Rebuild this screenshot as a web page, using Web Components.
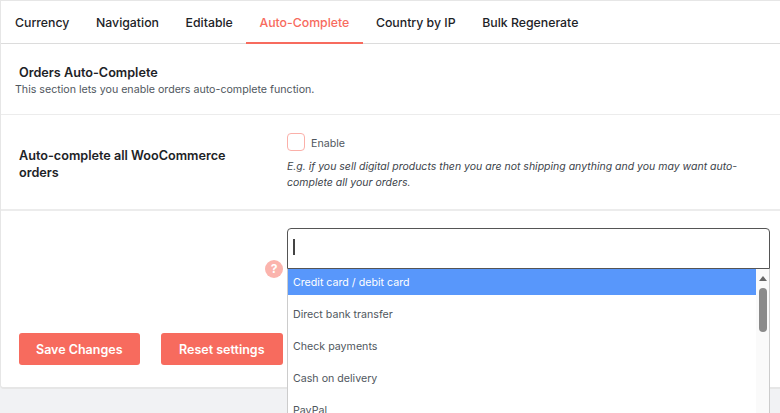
<!DOCTYPE html>
<html>
<head>
<meta charset="utf-8">
<title>Auto-Complete</title>
<style>
  html, body { margin: 0; height: 413px; overflow: hidden; background: #f1f2f4; }
  body { font-family: Inter, "Liberation Sans", sans-serif; color: #1d2327; }
</style>
</head>
<body>
<settings-page>
  <tab-bar slot="tabs" active="Auto-Complete" tabs="Currency,Navigation,Editable,Auto-Complete,Country by IP,Bulk Regenerate"></tab-bar>
  <section-head title="Orders Auto-Complete">This section lets you enable orders auto-complete function.</section-head>
  <check-row label="Auto-complete all WooCommerce orders" check="Enable">E.g. if you sell digital products then you are not shipping anything and you may want auto-complete all your orders.</check-row>
  <select-row options="Credit card / debit card,Direct bank transfer,Check payments,Cash on delivery,PayPal"></select-row>
</settings-page>

<script>
class SettingsPage extends HTMLElement {
  connectedCallback() {
    this.attachShadow({ mode: 'open' });
    this.shadowRoot.innerHTML = `
      <style>
        :host { display: block; }
        .card {
          height: 386px;
          background: #fff;
          border-top: 1px solid #e6e6e6;
          border-left: 1px solid #e6e6e6;
          border-bottom: 2px solid #e6e6e6;
          border-radius: 0 0 0 4px;
          display: flex;
          flex-direction: column;
        }
      </style>
      <div class="card"><slot name="tabs"></slot><slot></slot></div>
    `;
  }
}
customElements.define('settings-page', SettingsPage);

class TabBar extends HTMLElement {
  connectedCallback() {
    this.attachShadow({ mode: 'open' });
    const active = this.getAttribute('active');
    const tabs = this.getAttribute('tabs').split(',').map(t =>
      `<a class="${t === active ? 'on' : ''}">${t}</a>`).join('');
    this.shadowRoot.innerHTML = `
      <style>
        :host { display: block; }
        nav {
          display: flex;
          height: 42px;
          padding-left: 0.7px;
          border-bottom: 1px solid #dcdcdc;
        }
        a {
          padding: 0 13.3px;
          line-height: 43px;
          font-size: 12.3px;
          font-weight: 500;
          color: #1d2327;
          white-space: nowrap;
          height: 41px;
        }
        a.on {
          color: #f76b5e;
          border-bottom: 2px solid #f76b5e;
        }
      </style>
      <nav>${tabs}</nav>
    `;
  }
}
customElements.define('tab-bar', TabBar);

class SectionHead extends HTMLElement {
  connectedCallback() {
    this.attachShadow({ mode: 'open' });
    this.shadowRoot.innerHTML = `
      <style>
        :host { display: block; }
        .box {
          height: 71px;
          box-sizing: border-box;
          padding: 21px 0 0 14px;
          border-bottom: 1px solid #ececec;
        }
        h2 {
          margin: 0 0 0 4px;
          font-size: 12.65px;
          line-height: 16px;
          font-weight: 600;
          color: #1d2327;
        }
        p {
          margin: 1px 0 0;
          font-size: 10.65px;
          line-height: 16px;
          color: #50575e;
        }
      </style>
      <div class="box">
        <h2>${this.getAttribute('title')}</h2>
        <p><slot></slot></p>
      </div>
    `;
  }
}
customElements.define('section-head', SectionHead);

class CheckRow extends HTMLElement {
  connectedCallback() {
    this.attachShadow({ mode: 'open' });
    this.shadowRoot.innerHTML = `
      <style>
        :host { display: block; }
        .row {
          display: grid;
          grid-template-columns: 268px 1fr;
          height: 96px;
          box-sizing: border-box;
          padding: 18px 30px 0 18px;
          border-bottom: 2px solid #ececec;
        }
        .label {
          width: 225px;
          font-size: 12.65px;
          line-height: 17px;
          font-weight: 600;
          padding-top: 13.5px;
          color: #1d2327;
        }
        .check { display: flex; align-items: center; gap: 6px; font-size: 10.65px; color: #50575e; }
        .check span:last-child { padding-top: 2px; }
        .box {
          width: 16px;
          height: 16px;
          border: 1px solid #fbb0a9;
          border-radius: 4px;
          background: #fff;
        }
        .desc {
          margin: 8px 0 0;
          font-size: 10.5px;
          line-height: 16px;
          font-style: italic;
          color: #3c434a;
        }
      </style>
      <div class="row">
        <div class="label">${this.getAttribute('label')}</div>
        <div>
          <div class="check"><span class="box"></span><span>${this.getAttribute('check')}</span></div>
          <p class="desc"><slot></slot></p>
        </div>
      </div>
    `;
  }
}
customElements.define('check-row', CheckRow);

class SelectRow extends HTMLElement {
  connectedCallback() {
    this.attachShadow({ mode: 'open' });
    const items = this.getAttribute('options').split(',').map((o, i) =>
      `<li class="${i === 0 ? 'hi' : ''}">${o}</li>`).join('');
    this.shadowRoot.innerHTML = `
      <style>
        :host { display: block; flex: 1; }
        .row {
          display: flex;
          flex-direction: column;
          padding: 17px 10px 0 18px;
        }
        .field {
          display: flex;
          align-items: flex-end;
          justify-content: flex-end;
          gap: 4px;
        }
        .help {
          width: 18px;
          height: 18px;
          margin-bottom: -9px;
          border-radius: 50%;
          background: #fbb4ad;
          color: #fff;
          font-size: 12px;
          font-weight: 700;
          line-height: 18px;
          text-align: center;
        }
        .combo { position: relative; width: 483px; }
        .input {
          height: 41px;
          box-sizing: border-box;
          border: 1px solid #555;
          border-radius: 4px 4px 0 0;
          display: flex;
          align-items: center;
          padding-left: 5px;
        }
        .caret { width: 2px; height: 16px; margin-bottom: 4px; background: #444; }
        .drop {
          position: absolute;
          left: 0;
          right: 0;
          top: 41px;
          height: 160px;
          box-sizing: border-box;
          background: #fff;
          border-left: 1px solid #ccc;
          border-right: 1px solid #ccc;
          display: flex;
          overflow: hidden;
        }
        ul { list-style: none; margin: 0; padding: 0; flex: 1; }
        li {
          height: 32px;
          padding-left: 5px;
          line-height: 32px;
          font-size: 10.65px;
          color: #50575e;
        }
        li.hi { height: 26px; margin-bottom: 4px; line-height: 28px; background: #5897fb; color: #fff; }
        .bar {
          width: 13px;
          background: #fafafa;
          display: flex;
          flex-direction: column;
          align-items: center;
          padding-top: 7px;
        }
        .up {
          width: 0;
          height: 0;
          border-left: 4px solid transparent;
          border-right: 4px solid transparent;
          border-bottom: 5px solid #666;
        }
        .thumb {
          width: 8px;
          height: 44px;
          margin-top: 7px;
          border-radius: 4px;
          background: #8a8a8a;
        }
        .actions { display: flex; gap: 21px; margin-top: 64px; }
        button {
          height: 32px;
          border: 0;
          border-radius: 3px;
          background: #f76b5e;
          color: #fff;
          font: 600 12.5px Inter, "Liberation Sans", sans-serif;
          padding: 0 17px;
        }
        button + button { padding: 0 18.5px; }
      </style>
      <div class="row">
        <div class="field">
          <span class="help">?</span>
          <div class="combo">
            <div class="input"><span class="caret"></span></div>
            <div class="drop">
              <ul>${items}</ul>
              <div class="bar"><span class="up"></span><span class="thumb"></span></div>
            </div>
          </div>
        </div>
        <div class="actions"><button>Save Changes</button><button>Reset settings</button></div>
      </div>
    `;
  }
}
customElements.define('select-row', SelectRow);
</script>
</body>
</html>
